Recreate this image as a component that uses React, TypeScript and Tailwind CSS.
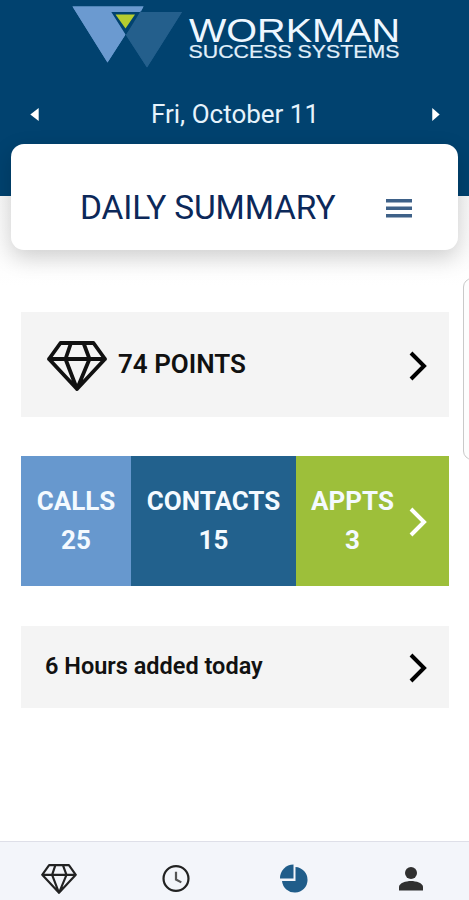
import React from "react";

function Logo() {
  return (
    <svg className="block h-[76px] w-full shrink-0" viewBox="0 0 469 76" fill="none">
      <path d="M72.5 6.5H143.5L107.5 62.5Z" fill="#6b9ad0" />
      <path d="M111 12H182L147 67.5Z" fill="#245f8c" />
      <path d="M141 10.5H143L125.5 35.5L110.5 12H140Z" fill="#01426f" />
      <path d="M72.5 6.5H143.5L141 11.5H111L125.5 34.5L107.5 62.5Z" fill="#6b9ad0" />
      <path d="M140 12H182L147 67.5L126 35Z" fill="#245f8c" />
      <path d="M115.5 14.5H135L125.5 28.5Z" fill="#b5cc2f" />
      <text x="189" y="41.500" textLength="211" lengthAdjust="spacingAndGlyphs" fontSize="33" fill="#eef7ff" className="font-['Liberation_Sans',Arial,sans-serif]">WORKMAN</text>
      <text x="188.500" y="58.300" textLength="211" lengthAdjust="spacingAndGlyphs" fontSize="17.5" fill="#e2f0fb" stroke="#e2f0fb" strokeWidth="0.2" className="font-['Liberation_Sans',Arial,sans-serif]">SUCCESS SYSTEMS</text>
    </svg>
  );
}

function Diamond({ className, stroke }: { className: string; stroke: number }) {
  return (
    <svg className={className} viewBox="0 0 60 50" fill="none" stroke="currentColor" strokeWidth={stroke} strokeLinejoin="round" strokeLinecap="round">
      <path d="M13.500 2H46.500L58 18L30 48L2 18Z M2 18H58 M24 2L18.500 18L30 48L42.500 18L36.500 2" />
    </svg>
  );
}

function Chevron({ className }: { className: string }) {
  return (
    <svg className={className} viewBox="0 0 20 32" fill="none" stroke="currentColor" strokeWidth="4">
      <path d="M3 3L16 16L3 29" />
    </svg>
  );
}

function Stat({ label, value, className }: { label: string; value: string; className: string }) {
  return (
    <div className={`flex h-full shrink-0 flex-col items-center pt-[26px] text-[26px] leading-[39px] font-bold text-[#f4faff] ${className}`}>
      <span>{label}</span>
      <span>{value}</span>
    </div>
  );
}

export default function App() {
  return (
    <div className="relative flex h-[900px] w-[469px] flex-col overflow-hidden bg-white font-['Roboto',sans-serif]">
      <header className="h-[196px] shrink-0 bg-[#01426f]">
        <Logo />
        <div className="flex h-[76px] items-center justify-between pr-[29px] pl-[30px] text-white">
          <svg className="h-[13px] w-[9px]" viewBox="0 0 9 14" fill="currentColor"><path d="M0 7L9 0V14Z" /></svg>
          <span className="text-[26px] text-[#e6f3fc]">Fri, October 11</span>
          <svg className="h-[13px] w-[9px]" viewBox="0 0 9 14" fill="currentColor"><path d="M9 7L1 0V14Z" /></svg>
        </div>
      </header>

      <div className="flex min-h-0 flex-1 flex-col bg-linear-to-b from-[#f8f8f8] via-white via-[14%] to-white">
        <section className="mx-[11px] -mt-[52px] flex h-[106px] shrink-0 items-center justify-between rounded-[13px] bg-white pt-[21px] pr-[46px] pl-[69px] shadow-[0_8px_22px_rgba(0,0,0,0.18)]">
          <h1 className="text-[33.500px] leading-10 font-normal tracking-[-0.15px] whitespace-nowrap text-[#0c2859]">DAILY SUMMARY</h1>
          <svg className="mt-[2px] h-[19px] w-[26px]" viewBox="0 0 26 19" fill="#3e6188"><path d="M0 0H26V3.500H0ZM0 7.500H26V11H0ZM0 15H26V18.500H0Z" /></svg>
        </section>

        <main className="flex flex-col pt-[62px] pr-[20px] pl-[21px]">
          <div className="flex h-[105px] items-center bg-[#f4f4f4] pr-[21px] pl-[26px] text-[#111]">
            <Diamond className="mt-[2px] h-[50px] w-[60px]" stroke={3.8} />
            <span className="ml-[11px] text-[26px] font-semibold">74 POINTS</span>
            <Chevron className="mt-[2px] ml-auto h-[32px] w-[20px] text-black" />
          </div>

          <div className="mt-[39px] flex h-[130px] text-white">
            <Stat label="CALLS" value="25" className="w-[110px] bg-[#6798ce]" />
            <Stat label="CONTACTS" value="15" className="w-[165px] bg-[#22618d]" />
            <div className="flex flex-1 items-center bg-[#9dbf3a] pr-[21px] pl-[15px]">
              <Stat label="APPTS" value="3" className="w-[83px]" />
              <Chevron className="mt-[2px] ml-auto h-[32px] w-[20px] text-white" />
            </div>
          </div>

          <div className="mt-[40px] flex h-[82px] items-center bg-[#f4f4f4] pr-[21px] pl-[24px] text-[#111]">
            <span className="text-[23.500px] font-semibold">6 Hours added today</span>
            <Chevron className="mt-[2px] ml-auto h-[32px] w-[20px] text-black" />
          </div>
        </main>
      </div>

      <nav className="grid h-[59px] shrink-0 grid-cols-4 items-start justify-items-center border-t border-[#dedfe8] bg-[#f3f5fa] pt-[22px] text-[#222]">
        <Diamond className="h-[30px] w-[36px]" stroke={3.6} />
        <svg className="h-[29px] w-[30px]" viewBox="0 0 30 30" fill="none" stroke="currentColor" strokeWidth="2.3">
          <circle cx="15" cy="15" r="12.900" /><path d="M15 8V16L20.500 19" stroke="#555" />
        </svg>
        <svg className="ml-px h-[30px] w-[30px]" viewBox="0 0 30 30" fill="#205d8a">
          <path d="M16.500 3A12.800 12.800 0 1 1 3 17H16.500Z" /><path d="M14.500 0.500V14.500H1A13.500 13.500 0 0 1 14.500 0.500Z" />
        </svg>
        <svg className="ml-px h-[30px] w-[30px]" viewBox="0 0 30 30" fill="#303030">
          <circle cx="15" cy="9" r="6" /><path d="M3 26.500V23C3 19 10 17 15 17S27 19 27 23V26.500Z" />
        </svg>
      </nav>

      <div className="absolute top-[278px] left-[463px] h-[182px] w-[20px] rounded-[9px] border border-[#c9c9c9] bg-[#fdfdfd]" />
    </div>
  );
}
